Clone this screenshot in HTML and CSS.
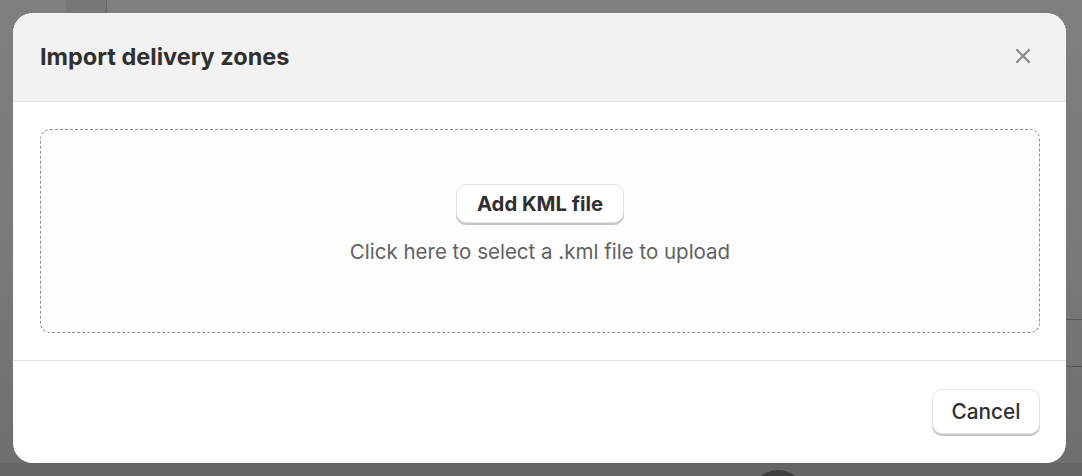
FILE: index.html
```html
<!DOCTYPE html>
<html lang="en">
<head>
<meta charset="utf-8">
<title>Import delivery zones</title>
<link rel="stylesheet" href="styles.css">
</head>
<body>
<div class="backdrop" aria-hidden="true">
  <div class="bg-tab"></div>
  <div class="bg-line l1"></div>
  <div class="bg-line l2"></div>
  <div class="bg-line l3 light"></div>
  <div class="bg-line l4 light"></div>
  <div class="bg-bottom"></div>
  <div class="bg-circle"></div>
</div>
<div class="modal" role="dialog" aria-labelledby="modal-title">
  <header class="modal-header">
    <h2 id="modal-title" class="modal-title">Import delivery zones</h2>
    <button class="close-btn" aria-label="Close">
      <svg width="16" height="16" viewBox="0 0 16 16"><path d="M2 2 L14 14 M14 2 L2 14" stroke="#8a8a8a" stroke-width="2.2" stroke-linecap="round"/></svg>
    </button>
  </header>
  <section class="modal-body">
    <div class="dropzone">
      <button class="btn btn-add">Add KML file</button>
      <p class="hint">Click here to select a .kml file to upload</p>
    </div>
  </section>
  <footer class="modal-footer">
    <button class="btn btn-cancel">Cancel</button>
  </footer>
</div>
</body>
</html>
```
FILE: styles.css
```css
* { box-sizing: border-box; }
html, body { margin: 0; padding: 0; }
html { overflow: hidden; }
body {
  width: 1082px;
  height: 476px;
  overflow: hidden;
  position: relative;
  background: linear-gradient(to bottom, #7f7f7f 0%, #7a7a7a 50%, #6e6e6e 100%);
  font-family: Inter, "Noto Sans", "Liberation Sans", sans-serif;
  padding: 13px 16px 0 13px;
}
.backdrop { position: absolute; inset: 0; z-index: 0; overflow: hidden; }
.bg-tab {
  position: absolute; left: 66px; top: 0; width: 41px; height: 13px;
  background: #777; border-right: 1px solid #6a6a6a;
}
.bg-line { position: absolute; left: 1066px; right: 0; height: 1px; background: #555; }
.bg-line.light { background: #6f6f6f; }
.l1 { top: 319px; } .l2 { top: 366px; } .l3 { top: 380px; } .l4 { top: 442px; }
.bg-bottom { position: absolute; left: 0; right: 0; top: 463px; bottom: 0; background: #666; }
.bg-circle {
  position: absolute; left: 750px; top: 470px; width: 56px; height: 56px;
  border-radius: 50%; background: #3f3f3f;
}
.modal {
  position: relative; z-index: 1;
  width: 1053px; height: 450px;
  background: #fff;
  border-radius: 20px;
  overflow: hidden;
  display: flex; flex-direction: column;
}
.modal-header {
  height: 89px;
  background: #f2f2f2;
  border-bottom: 1px solid #e3e3e3;
  display: flex; align-items: center; justify-content: space-between;
  padding: 0 31px 2px 27px;
}
.modal-title {
  margin: 0;
  font-size: 23.5px; font-weight: 650; color: #303030;
  letter-spacing: 0;
}
.close-btn {
  border: 0; background: transparent; padding: 0; width: 24px; height: 24px;
  display: flex; align-items: center; justify-content: center; cursor: pointer;
}
.modal-body {
  padding: 27px 26px 27px 27px;
  border-bottom: 1px solid #e3e3e3;
}
.dropzone {
  height: 204px;
  border: 1px dashed #8f8f8f;
  border-radius: 10px;
  background: #fdfdfd;
  display: flex; flex-direction: column; align-items: center; justify-content: center;
  gap: 16px;
  padding-bottom: 15px;
}
.btn {
  font-family: inherit;
  background: #fff;
  border: 1px solid #e3e3e3;
  border-radius: 10px;
  box-shadow: 0 2px 0 0 #c4c4c4;
  color: #303030;
  cursor: pointer;
}
.btn-add {
  width: 168px; height: 39px;
  font-size: 20.3px; font-weight: 650;
}
.hint {
  margin: 0; font-size: 20.5px; color: #616161;
}
.modal-footer {
  flex: 1;
  display: flex; align-items: center; justify-content: flex-end;
  padding: 0 26px 2px 0;
}
.btn-cancel {
  width: 108px; height: 45px;
  font-size: 20.8px; font-weight: 550;
}
```
